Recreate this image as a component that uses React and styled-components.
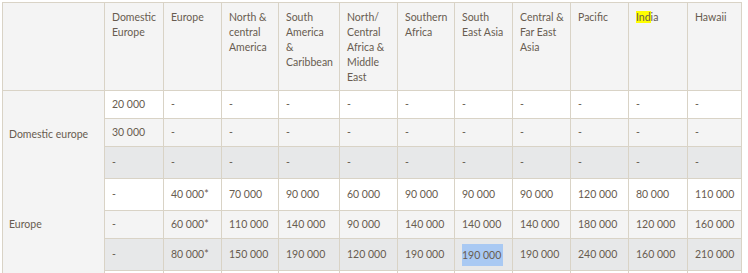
import React from "react";
import styled, { createGlobalStyle } from "styled-components";

const GlobalStyle = createGlobalStyle`
  body {
    margin: 2px;
    background: #fff;
    font-family: Lato, "Open Sans", sans-serif;
  }
`;

// header labels, broken where the reference wraps them
const columns = [
  { lines: ["Domestic", "Europe"], width: 59 },
  { lines: ["Europe"], width: 58 },
  { lines: ["North &", "central", "America"], width: 57 },
  { lines: ["South", "America", "&", "Caribbean"], width: 61 },
  { lines: ["North/", "Central", "Africa &", "Middle", "East"], width: 58 },
  { lines: ["Southern", "Africa"], width: 57 },
  { lines: ["South", "East Asia"], width: 58 },
  { lines: ["Central &", "Far East", "Asia"], width: 58 },
  { lines: ["Pacific"], width: 58 },
  { lines: ["India"], width: 59, mark: "Ind" },
  { lines: ["Hawaii"], width: 54 },
];

const groups = [
  {
    name: "Domestic europe",
    rows: [
      { tone: "white", height: 28, cells: ["20 000", "-", "-", "-", "-", "-", "-", "-", "-", "-", "-"] },
      { tone: "light", height: 28, cells: ["30 000", "-", "-", "-", "-", "-", "-", "-", "-", "-", "-"] },
      { tone: "dark", height: 32, cells: ["-", "-", "-", "-", "-", "-", "-", "-", "-", "-", "-"] },
    ],
  },
  {
    name: "Europe",
    rows: [
      { tone: "white", height: 32, cells: ["-", "40 000*", "70 000", "90 000", "60 000", "90 000", "90 000", "90 000", "120 000", "80 000", "110 000"] },
      { tone: "light", height: 28, cells: ["-", "60 000*", "110 000", "140 000", "90 000", "140 000", "140 000", "140 000", "180 000", "120 000", "160 000"] },
      { tone: "dark", height: 32, cells: ["-", "80 000*", "150 000", "190 000", "120 000", "190 000", "190 000", "190 000", "240 000", "160 000", "210 000"], selected: 6 },
    ],
  },
  {
    name: "North & central America",
    rows: [
      { tone: "white", height: 32, cells: ["-", "70 000", "60 000", "90 000", "90 000", "110 000", "110 000", "110 000", "120 000", "110 000", "90 000"] },
    ],
  },
];

const tones = {
  white: "#ffffff",
  light: "#f4f4f4",
  dark: "#e7e8e9",
};

const HeadLabel = ({ lines, mark }) =>
  lines.map((line, i) => (
    <Line key={i}>
      {mark && line.startsWith(mark) ? (
        <>
          <Mark>{mark}</Mark>
          {line.slice(mark.length)}
        </>
      ) : (
        line
      )}
    </Line>
  ));

export default function App() {
  return (
    <>
      <GlobalStyle />
      <Table>
        <colgroup>
          <col style={{ width: 102 }} />
          {columns.map((c, i) => (
            <col key={i} style={{ width: c.width }} />
          ))}
        </colgroup>
        <thead>
          <Row $h={88}>
            <HeadCell />
            {columns.map((c, i) => (
              <HeadCell key={i}>
                <HeadLabel lines={c.lines} mark={c.mark} />
              </HeadCell>
            ))}
          </Row>
        </thead>
        <tbody>
          {groups.map((g) =>
            g.rows.map((r, i) => (
              <Row key={g.name + i} $h={r.height}>
                {i === 0 && <LabelCell rowSpan={g.rows.length}>{g.name}</LabelCell>}
                {r.cells.map((v, j) => (
                  <Cell key={j} $bg={tones[r.tone]}>
                    {r.selected === j ? <Selected>{v}</Selected> : v}
                  </Cell>
                ))}
              </Row>
            ))
          )}
        </tbody>
      </Table>
    </>
  );
}

const Table = styled.table`
  width: 740px;
  table-layout: fixed;
  border-collapse: collapse;
  color: #685c50;
  font-size: 10.5px;
  line-height: 15px;
`;

const Row = styled.tr`
  height: ${(p) => p.$h}px;
`;

const HeadCell = styled.th`
  padding: 7px 2px 0 7px;
  background: #f4f4f4;
  border: 1px solid #d9d3c6;
  text-align: left;
  vertical-align: top;
  font-weight: normal;
`;

const Line = styled.div`
  white-space: nowrap;
`;

const Mark = styled.span`
  background: #ffff00;
`;

const LabelCell = styled.td`
  padding: 0 6px;
  background: #f4f4f4;
  border: 1px solid #d9d3c6;
  border-bottom-style: hidden;
  vertical-align: middle;
  white-space: nowrap;
`;

const Cell = styled.td`
  padding: 0 5px 0 7px;
  background: ${(p) => p.$bg};
  border: 1px solid #d9d3c6;
  vertical-align: middle;
  white-space: nowrap;
`;

const Selected = styled.span`
  display: inline-block;
  background: #a9c9f3;
  line-height: 22px;
  padding-right: 2px;
`;
